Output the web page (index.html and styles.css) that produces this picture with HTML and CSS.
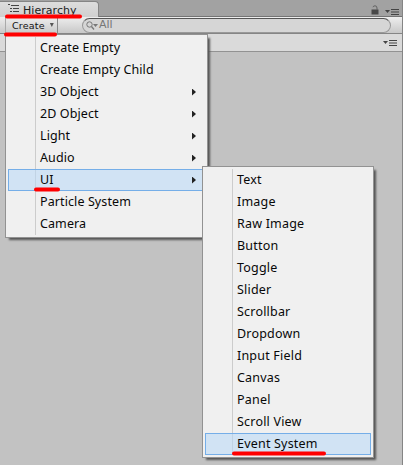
FILE: index.html
```html
<!DOCTYPE html>
<html lang="en">
<head>
<meta charset="utf-8">
<title>Hierarchy</title>
<link rel="stylesheet" href="styles.css">
</head>
<body>
<div class="panel">
  <header class="tabs">
    <div class="tab">
      <svg class="list-icon" width="11" height="9" viewBox="0 0 11 9"><path d="M0 .5h2M3 1.500h8M2 4.500h2M5 4.500h6M2 7.500h2M5 7.500h6" stroke="#444" fill="none"/></svg>
      <span>Hierarchy</span>
    </div>
    <div class="tab-tools">
      <svg width="8" height="10" viewBox="0 0 8 10"><path d="M.5 4.500h7v5h-7z" fill="#484848"/><path d="M2 2.200Q2.200 .8 4 .8 6 .8 6 3v2" stroke="#626262" fill="none"/></svg>
      <svg width="14" height="6" viewBox="0 0 14 6"><path d="M0 1h5L2.500 4z" fill="#444"/><path d="M6 .5h8M6 3h8M6 5.500h8" stroke="#444"/></svg>
    </div>
  </header>
  <div class="toolbar">
    <div class="create"><span>Create</span><i></i></div>
    <div class="search">
      <svg width="12" height="9" viewBox="0 0 12 9"><circle cx="3.500" cy="3.500" r="2.700" fill="none" stroke="#777"/><path d="M5.500 5.500L8 8.500" stroke="#777" stroke-width="1.300"/><path d="M7 3h5L9.500 6z" fill="#777"/></svg>
      <span>All</span>
    </div>
  </div>
  <div class="scene">
    <svg width="14" height="6" viewBox="0 0 14 6"><path d="M0 1h5L2.500 4z" fill="#444"/><path d="M6 .5h8M6 3h8M6 5.500h8" stroke="#444"/></svg>
  </div>
  <div class="content"></div>
</div>
<ul class="menu main-menu">
  <li>Create Empty</li>
  <li>Create Empty Child</li>
  <li class="sub">3D Object</li>
  <li class="sub">2D Object</li>
  <li class="sub">Light</li>
  <li class="sub">Audio</li>
  <li class="sub active">UI</li>
  <li>Particle System</li>
  <li>Camera</li>
</ul>
<ul class="menu ui-menu">
  <li>Text</li>
  <li>Image</li>
  <li>Raw Image</li>
  <li>Button</li>
  <li>Toggle</li>
  <li>Slider</li>
  <li>Scrollbar</li>
  <li>Dropdown</li>
  <li>Input Field</li>
  <li>Canvas</li>
  <li>Panel</li>
  <li>Scroll View</li>
  <li class="active">Event System</li>
</ul>
<svg class="marks" width="403" height="465" viewBox="0 0 403 465"><path d="M7 16.500H80M6 34.500H55M36 189.500H58M234 453.500H324"/></svg>
</body>
</html>
```

FILE: styles.css
```css
* { box-sizing: border-box; }
body {
  margin: 0;
  width: 403px;
  height: 465px;
  overflow: hidden;
  position: relative;
  background: #c2c2c2;
  font-family: "Noto Sans", sans-serif;
}
svg { display: block; flex: none; }
.panel {
  height: 465px;
  display: flex;
  flex-direction: column;
  border-right: 1px solid #858585;
}
.tabs {
  height: 17px;
  display: flex;
  justify-content: space-between;
  background: #a2a2a2;
  border-bottom: 1px solid #747474;
}
.tab {
  width: 99px;
  height: 16px;
  margin-top: 1px;
  padding: 0 0 0 8px;
  display: flex;
  gap: 4px;
  background: linear-gradient(#ddd, #d0d0d0);
  border: 1px solid #858585;
  border-left: 0;
  border-bottom: 0;
  border-radius: 0 4px 0 0;
  color: #222;
  font: 11px/17px "DejaVu Sans", sans-serif;
  letter-spacing: .05px;
}
.list-icon { margin-top: 2px; }
.tab-tools { display: flex; gap: 6px; padding: 5px 3px 0 0; }
.tab-tools svg + svg { margin-top: 4px; }
.toolbar {
  height: 17px;
  padding: 0 11px 0 5px;
  display: flex;
  align-items: center;
  gap: 25px;
  background: linear-gradient(#eee, #c8c8c8);
  border-bottom: 1px solid #858585;
}
.create {
  width: 53px;
  height: 16px;
  padding-left: 6px;
  display: flex;
  gap: 5px;
  border-left: 1px solid #aaa;
  border-right: 1px solid #888;
  background: linear-gradient(#eee, #cacaca);
  color: #111;
  font: 9.500px/17px "DejaVu Sans", sans-serif;
  letter-spacing: .2px;
}
.create i {
  margin-top: 6px;
  width: 4px;
  height: 4px;
  background: #555;
  clip-path: polygon(0 0, 100% 0, 50% 100%);
}
.search {
  flex: 1;
  height: 15px;
  margin-left: -1px;
  padding-left: 3px;
  display: flex;
  align-items: center;
  gap: 1px;
  border: 1px solid #999;
  border-top-color: #555;
  border-radius: 8px;
  background: #d6d6d6;
  color: #777;
  font: 11px/13px "DejaVu Sans", sans-serif;
}
.search span { margin-top: -2px; }
.scene {
  height: 18px;
  padding: 6px 5px 0 0;
  display: flex;
  justify-content: flex-end;
  background: #dadada;
  border-bottom: 1px solid #929292;
}
.content { flex: 1; background: #c2c2c2; }
.menu {
  position: absolute;
  margin: 0;
  padding: 2px;
  list-style: none;
  background: linear-gradient(#ccc, #ccc) 29px 2px / 1px calc(100% - 4px) no-repeat #f0f0f0;
  border: 1px solid #929292;
  box-shadow: 3px 3px 2px -1px #555;
  color: #080808;
  font-size: 12.500px;
  letter-spacing: .1px;
  line-height: 20px;
}
.main-menu { left: 5px; top: 34px; width: 203px; height: 204px; }
.ui-menu { left: 202px; top: 166px; width: 172px; height: 292px; letter-spacing: .2px; }
.menu li {
  height: 22px;
  padding: 0 8px 0 31px;
  border: 1px solid transparent;
  display: flex;
  align-items: center;
  justify-content: space-between;
}
.menu .active { background: rgba(184, 217, 247, .55); border-color: #75aee8; }
.sub::after {
  content: "";
  width: 4px;
  height: 7px;
  background: #222;
  clip-path: polygon(0 0, 100% 50%, 0 100%);
}
.marks { position: absolute; left: 0; top: 0; }
.marks path { stroke: #f00; stroke-width: 4; stroke-linecap: round; fill: none; }
```
